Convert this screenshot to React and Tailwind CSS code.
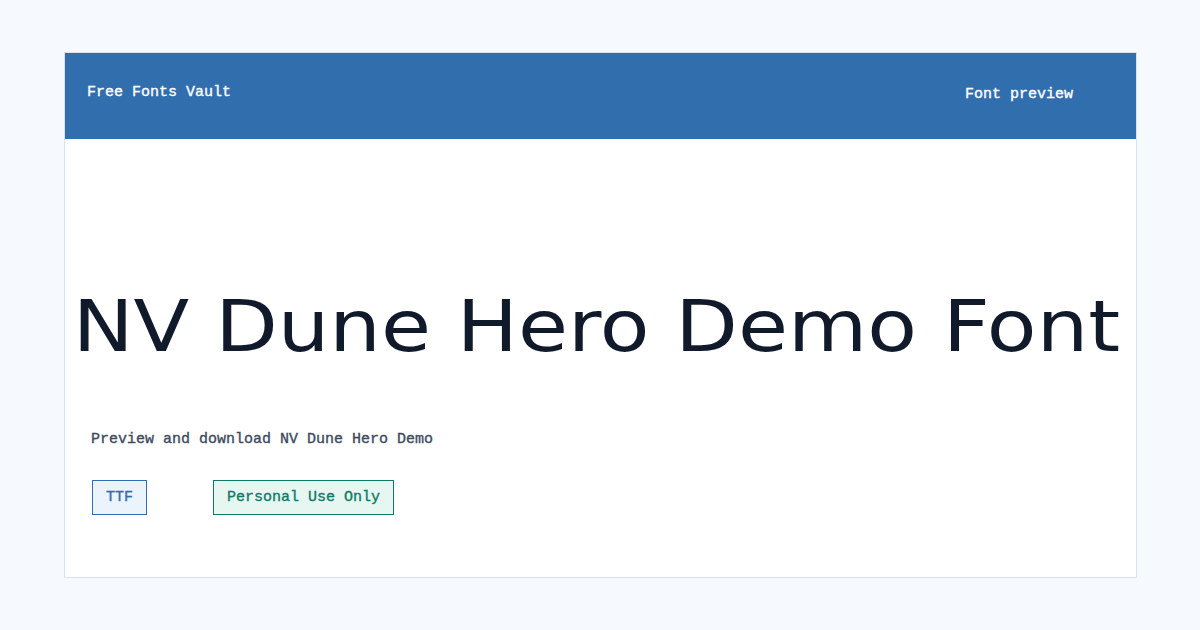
export default function App() {
  return (
    <div className="min-h-[630px] w-[1200px] bg-[#f6f9fe] pt-[52px] pl-[64px] [-webkit-text-stroke:0.35px_currentColor]" style={{ fontFamily: '"Liberation Mono", monospace' }}>
      <div className="w-[1073px] h-[526px] bg-white border border-[#d9e2ee] flex flex-col">
        <div className="h-[86px] bg-[#306eae] flex items-start justify-between pl-[22px] pr-[63px] text-white text-[15px]">
          <div className="mt-[29px]">Free Fonts Vault</div>
          <div className="mt-[31px]">Font preview</div>
        </div>
        <div className="h-[142px]" />
        <div className="flex justify-center">
          <div className="text-[#111a2b] text-[72px] leading-[90px] whitespace-nowrap scale-x-[1.13] -translate-x-[4px] [-webkit-text-stroke:0px]" style={{ fontFamily: '"DejaVu Sans", sans-serif', fontWeight: 400 }}>
            NV Dune Hero Demo Font
          </div>
        </div>
        <div className="pl-[26px] mt-[58px] text-[15px] text-[#3d4a5e]">Preview and download NV Dune Hero Demo</div>
        <div className="pl-[27px] mt-[28px] flex gap-[66px] text-[15px]">
          <div className="h-[35px] px-[13px] pt-[3px] flex items-center border border-[#306eae] bg-[#ebf3fd] text-[#306eae]">TTF</div>
          <div className="h-[35px] px-[13px] pt-[3px] flex items-center border border-[#0f7a68] bg-[#e6f6f1] text-[#0f7a68]">Personal Use Only</div>
        </div>
      </div>
    </div>
  );
}
